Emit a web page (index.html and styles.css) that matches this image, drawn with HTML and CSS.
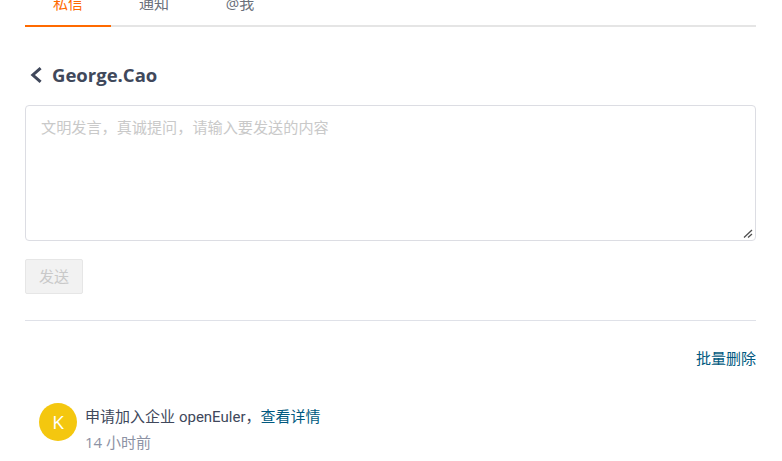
FILE: index.html
```html
<!DOCTYPE html>
<html lang="zh">
<head>
<meta charset="utf-8">
<title>私信</title>
<link rel="stylesheet" href="styles.css">
</head>
<body>
<div class="page">
  <nav class="tabs">
    <a class="tab active">私信</a>
    <a class="tab">通知</a>
    <a class="tab">@我</a>
  </nav>
  <h2 class="title">
    <svg class="back" viewBox="0 0 12 18" width="12" height="18"><path d="M10.6 2.1 L2.8 9 L10.6 15.9" fill="none" stroke="#40485b" stroke-width="3"/></svg>
    <span>George.Cao</span>
  </h2>
  <textarea class="input" placeholder="文明发言，真诚提问，请输入要发送的内容"></textarea>
  <button class="send" disabled>发送</button>
  <hr class="divider">
  <div class="actions"><a class="link">批量删除</a></div>
  <div class="msg">
    <div class="avatar">K</div>
    <div class="body">
      <div class="line">申请加入企业 <span class="latin">openEuler</span>，<a class="link">查看详情</a></div>
      <div class="time">14 小时前</div>
    </div>
  </div>
</div>
</body>
</html>
```
FILE: styles.css
```css
* { box-sizing: border-box; }
html, body { margin: 0; padding: 0; background: #fff; overflow: hidden; height: 100%; }
body { font-family: "Open Sans", "Noto Sans CJK SC", sans-serif; font-size: 15px; color: #40485b; }
.page { width: 731px; margin: -18px 0 0 25px; }
.tabs { display: flex; height: 45px; border-bottom: 2px solid #e5e5e5; }
.tab { width: 86px; height: 45px; text-align: center; line-height: 42px; font-size: 15px; color: #6a6f7a; }
.tab.active { color: #ff6a00; border-bottom: 2px solid #ff6a00; }
.title { display: flex; align-items: center; gap: 10px; margin: 35px 0 0; padding-left: 5px; height: 26px; font-size: 18.5px; font-weight: 700; line-height: 26px; color: #40485b; }
.input { display: block; width: 731px; height: 136px; margin-top: 17px; padding: 10px 15px; border: 1px solid #dcdde3; border-radius: 4px; font: 15px/22px "Open Sans", "Noto Sans CJK SC", sans-serif; color: #40485b; outline: none; }
.input::placeholder { color: #c9c9c9; opacity: 1; font-size: 15.15px; }
.input::-webkit-resizer { background: url("data:image/svg+xml,%3Csvg xmlns='http://www.w3.org/2000/svg' width='15' height='15'%3E%3Cpath d='M4 12.5L12 5M8 12.5L12 9' stroke='%23505050' stroke-width='1.3' fill='none'/%3E%3C/svg%3E"); }
.send { display: block; width: 58px; height: 35px; margin-top: 18px; padding: 0 0 2px; border: 1px solid #e6e6e6; border-radius: 2px; background: #f2f2f2; color: #c9c9c9; font: 15px "Open Sans", "Noto Sans CJK SC", sans-serif; }
.divider { height: 1px; margin: 26px 0 0; border: 0; background: #dfe1e8; }
.actions { display: flex; justify-content: flex-end; margin-top: 27px; line-height: 20px; }
.link { color: #005980; }
.msg { display: flex; gap: 8px; margin-top: 32px; padding-left: 14px; }
.avatar { flex: none; width: 38px; height: 38px; margin-top: 3px; border-radius: 50%; background: #f4c70f; color: #fff; font-size: 19px; line-height: 38px; text-align: center; }
.body { padding-top: 6px; }
.line { line-height: 20px; }
.latin { font-family: Roboto, sans-serif; }
.time { margin-top: 5px; line-height: 20px; color: #8c92a4; }
```
